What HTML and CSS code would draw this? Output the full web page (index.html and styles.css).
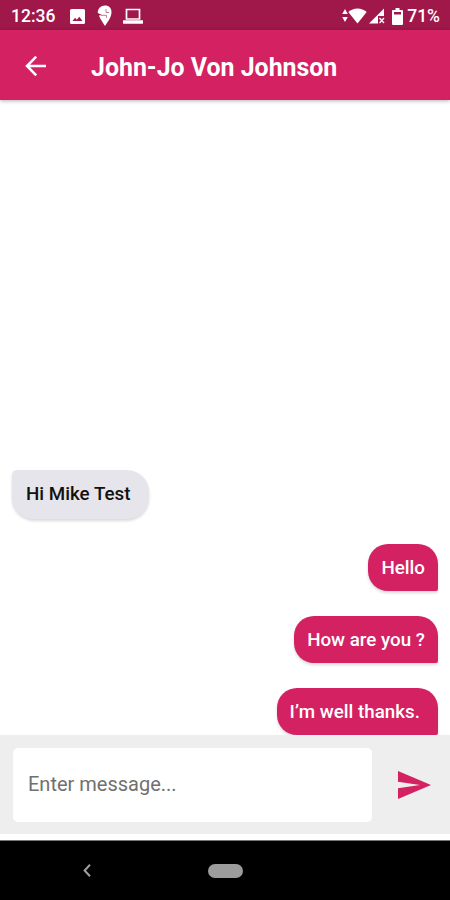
FILE: index.html
```html
<!DOCTYPE html>
<html lang="en">
<head>
    <meta charset="UTF-8">
    <meta name="viewport" content="width=device-width, initial-scale=1.0">
    <title>Chat</title>
    <link rel="stylesheet" href="styles.css">
</head>
<body>
    <div class="phone">
        <!-- Android status bar -->
        <div class="status-bar">
            <span class="clock">12:36</span>
            <svg class="icon-picture" width="15" height="15" viewBox="0 0 15 15">
                <path fill="#fff" fill-rule="evenodd" d="M1.500 0h12A1.500 1.500 0 0 1 15 1.500v12a1.500 1.500 0 0 1-1.500 1.500h-12A1.500 1.500 0 0 1 0 13.500v-12A1.500 1.500 0 0 1 1.500 0zM2.500 12h10l-3.200-4.200-2.500 3-1.700-2z"/>
            </svg>
            <svg class="icon-pin" width="15" height="22" viewBox="0 0 15 22">
                <path fill="#fff" d="M8 .5c4 0 6.500 2.500 6.500 6.500 0 5-3.500 9.500-6.500 14-2-3.500-5-7-6-10.500L5 10 .8 8C.5 3.500 4 .5 8 .5z"/>
                <path fill="none" stroke="#c07a98" stroke-width="1" d="M9 4v3.500h3M4 10.300h5.500v2.500"/>
            </svg>
            <svg class="icon-laptop" width="20" height="16" viewBox="0 0 20 16">
                <path fill="none" stroke="#fff" stroke-width="1.700" d="M3.500 1.500h13v9.500h-13zM.9 13.200h18.200v1.700H.9z"/>
            </svg>
            <div class="status-right">
                <svg width="6" height="14" viewBox="0 0 6 14">
                    <path fill="#fff" d="M3 0l2.800 5H.2zM3 13L.2 8h5.600z"/>
                </svg>
                <svg width="19" height="16" viewBox="0 0 19 16">
                    <path fill="#fff" d="M9.500 15.500L.3 4C3 1.800 6 .6 9.500.6s6.500 1.200 9.200 3.400z"/>
                </svg>
                <svg class="icon-signal" width="16" height="16" viewBox="0 0 16 16">
                    <path fill="#fff" d="M0 15.500L15 .5V8H9v7.500z"/>
                    <path fill="none" stroke="#fff" stroke-width="1.300" d="M10.500 10l4.500 5M15 10l-4.500 5"/>
                </svg>
                <svg class="icon-battery" width="11" height="17" viewBox="0 0 11 17">
                    <path fill="#fff" fill-rule="evenodd" d="M3.500 0h4v2H10a1 1 0 0 1 1 1v13a1 1 0 0 1-1 1H1a1 1 0 0 1-1-1V3a1 1 0 0 1 1-1h2.500zM2 4v2.500h7V4z"/>
                </svg>
                <span class="percent">71%</span>
            </div>
        </div>

        <div class="header">
            <svg class="back" width="22" height="22" viewBox="0 0 22 22">
                <path fill="none" stroke="#fff" stroke-width="2.500" d="M21 11H2.500M11.200 1.700L2 11l9.200 9.300"/>
            </svg>
            <h1>John-Jo Von Johnson</h1>
        </div>

        <div class="messages">
            <div class="message received">Hi Mike Test</div>
            <div class="message sent">Hello</div>
            <div class="message sent">How are you ?</div>
            <div class="message sent last">I’m well thanks.</div>
        </div>

        <div class="composer">
            <input type="text" placeholder="Enter message...">
            <button class="send" aria-label="Send">
                <svg width="33" height="28" viewBox="0 0 33 28">
                    <path fill="#d32162" d="M0 0l33 14L0 28V17.200L22 14 0 10.800z"/>
                </svg>
            </button>
        </div>

        <!-- Android navigation bar -->
        <div class="nav-bar">
            <svg class="nav-back" width="8" height="13" viewBox="0 0 8 13">
                <path fill="none" stroke="#a0a0a0" stroke-width="2" d="M7 .8L1.600 6.500 7 12.200"/>
            </svg>
            <div class="nav-home"></div>
        </div>
    </div>
</body>
</html>
```
FILE: styles.css
```css
* {
    box-sizing: border-box;
}

body {
    margin: 0;
    font-family: Roboto, "Liberation Sans", sans-serif;
    background-color: #fff;
}

svg {
    display: block;
    flex-shrink: 0;
}

.phone {
    display: flex;
    flex-direction: column;
    width: 450px;
    height: 900px;
    overflow: hidden;
}

.status-bar {
    display: flex;
    align-items: center;
    height: 30px;
    padding: 2px 10px 0 11px;
    background-color: #9f1849;
    color: #fff;
    font-size: 17.5px;
    font-weight: 500;
    flex-shrink: 0;
}

.clock {
    width: 59px;
    white-space: nowrap;
}

.icon-pin {
    margin-left: 12px;
}

.icon-laptop {
    margin-left: 11px;
}

.status-right {
    display: flex;
    align-items: center;
    margin-left: auto;
}

.icon-signal {
    margin-left: 2px;
}

.icon-battery {
    margin: 0 4px 0 7px;
}

.percent {
    font-weight: 500;
}

.header {
    display: flex;
    align-items: center;
    height: 70px;
    padding-left: 25px;
    background-color: #d32162;
    box-shadow: 0 1px 4px rgba(0, 0, 0, 0.3);
    color: #fff;
    flex-shrink: 0;
}

.back {
    margin-top: 1px;
}

.header h1 {
    margin: 4px 0 0 44px;
    font-size: 24.9px;
    font-weight: 700;
    white-space: nowrap;
}

.messages {
    display: flex;
    flex: 1;
    flex-direction: column;
    justify-content: flex-end;
    gap: 25px;
    padding: 0 12px;
    overflow: hidden;
}

.message {
    height: 47px;
    padding: 1px 13px 0;
    font-size: 18.8px;
    font-weight: 500;
    line-height: 47px;
    white-space: nowrap;
    box-shadow: 0 2px 3px rgba(0, 0, 0, 0.15);
    flex-shrink: 0;
}

.received {
    align-self: flex-start;
    height: 49px;
    padding: 1px 19px 0 14px;
    border-radius: 5px 22px 22px 22px;
    background-color: #e6e5eb;
    color: #111;
}

.sent {
    align-self: flex-end;
    border-radius: 20px 20px 2px 20px;
    background-color: #d32162;
    color: #fff;
}

.last {
    padding-right: 18px;
}

.composer {
    display: flex;
    align-items: center;
    height: 99px;
    padding: 0 19px 0 13px;
    margin-bottom: 6px;
    background-color: #eee;
    flex-shrink: 0;
}

.composer input {
    width: 359px;
    height: 74px;
    padding: 0 15px 2px;
    border: none;
    border-radius: 5px;
    background-color: #fff;
    font-family: inherit;
    font-size: 20px;
    outline: none;
}

.composer input::placeholder {
    color: #707070;
}

.send {
    margin-left: auto;
    padding: 0;
    border: none;
    background: none;
    cursor: pointer;
}

.nav-bar {
    display: flex;
    align-items: center;
    height: 60px;
    padding-left: 83px;
    border-top: 1px solid #777;
    background-color: #000;
    flex-shrink: 0;
}

.nav-home {
    width: 35px;
    height: 14px;
    margin-left: 117px;
    border-radius: 7px;
    background-color: #9c9c9c;
}
```
